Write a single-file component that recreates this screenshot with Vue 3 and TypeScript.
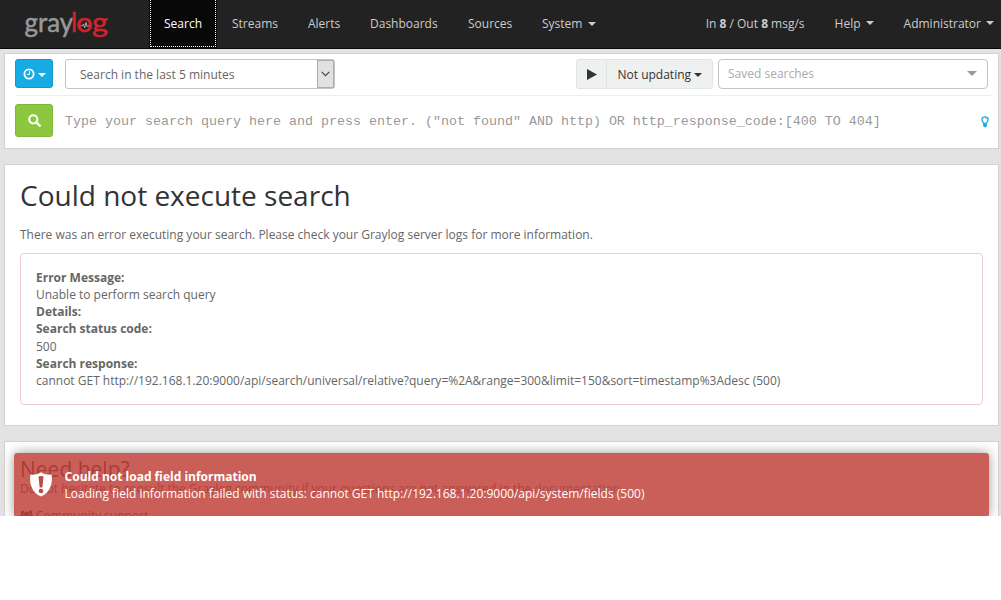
<script setup lang="ts">
interface NavItem {
  label: string
  key: string
  active?: boolean
  menu?: boolean
}

const navItems: NavItem[] = [
  { label: 'Search', key: 'search', active: true },
  { label: 'Streams', key: 'streams' },
  { label: 'Alerts', key: 'alerts' },
  { label: 'Dashboards', key: 'dashboards' },
  { label: 'Sources', key: 'sources' },
  { label: 'System', key: 'system', menu: true },
]

const errorLines: { text: string; strong: boolean }[] = [
  { text: 'Error Message:', strong: true },
  { text: 'Unable to perform search query', strong: false },
  { text: 'Details:', strong: true },
  { text: 'Search status code:', strong: true },
  { text: '500', strong: false },
  { text: 'Search response:', strong: true },
  {
    text: 'cannot GET http://192.168.1.20:9000/api/search/universal/relative?query=%2A&range=300&limit=150&sort=timestamp%3Adesc (500)',
    strong: false,
  },
]
</script>

<template>
  <div class="page">
    <nav class="navbar">
      <svg class="logo" width="90" height="36" viewBox="0 0 90 36">
        <text class="logo-gray" x="-.5" y="25" textLength="48.500" lengthAdjust="spacingAndGlyphs">gray</text>
        <text class="logo-red" x="46" y="25">l</text>
        <text class="logo-red" x="51.300" y="25" textLength="16.400" lengthAdjust="spacingAndGlyphs">o</text>
        <text class="logo-red" x="67" y="25" textLength="16" lengthAdjust="spacingAndGlyphs">g</text>
        <path d="M56 18.800h1.500l1-2 1.200 4 1.300-5.400 1.200 4.200.7-.8h1" fill="none" stroke="#c9c9c9" stroke-width=".8" />
      </svg>
      <div class="nav-left">
        <a v-for="item in navItems" :key="item.key" class="nav-item" :class="[item.key, { active: item.active }]">
          <span>{{ item.label }}</span><i v-if="item.menu" class="caret"></i>
        </a>
      </div>
      <div class="nav-right">
        <span class="throughput">In <b>8</b> / Out <b>8</b> msg/s</span>
        <span class="help">Help<i class="caret"></i></span>
        <span class="admin">Administrator<i class="caret"></i></span>
      </div>
    </nav>

    <section class="panel search-bar">
      <div class="row controls">
        <button class="btn blue">
          <svg width="12" height="12" viewBox="0 0 12 12" fill="none" stroke="#fff">
            <circle cx="6" cy="6" r="4.600" stroke-width="1.800" />
            <path d="M6.500 3.200v3.300H4" stroke-width="1" />
          </svg>
          <i class="caret"></i>
        </button>
        <div class="range">
          <span>Search in the last 5 minutes</span>
          <div class="range-arrow">
            <svg width="9" height="6" viewBox="0 0 9 6"><path d="M.7.8l3.800 3.800L8.300.8" fill="none" stroke="#444" stroke-width="1.200" /></svg>
          </div>
        </div>
        <div class="refresh">
          <div class="play"><svg width="10" height="11" viewBox="0 0 10 11"><path d="M0 0l10 5.500L0 11z" fill="#333" /></svg></div>
          <div class="updating"><span>Not updating</span><i class="caret"></i></div>
        </div>
        <div class="saved">
          <span>Saved searches</span>
          <i class="caret"></i>
        </div>
      </div>
      <div class="row query-row">
        <button class="btn green">
          <svg width="13" height="13" viewBox="0 0 13 13" fill="none" stroke="#fff">
            <circle cx="5.300" cy="5.300" r="4.100" stroke-width="2" />
            <path d="M8.300 8.300l3.400 3.400" stroke-width="2.400" stroke-linecap="round" />
          </svg>
        </button>
        <span class="query">Type your search query here and press enter. ("not found" AND http) OR http_response_code:[400 TO 404]</span>
        <svg class="bulb" width="8" height="12" viewBox="0 0 8 12">
          <path d="M2.600 7.500C2.500 6 .9 5.400.9 3.600.9 1.900 2.200.8 4 .8s3.100 1.100 3.100 2.800C7.100 5.400 5.500 6 5.400 7.500z" fill="#fff" stroke="#16ace3" stroke-width="1.300" />
          <path d="M2.100 7.300h3.800v2.700L4.800 11.300H3.200L2.100 10z" fill="#16ace3" />
          <path d="M4 2.300c.9 0 1.400.5 1.400 1.200" fill="none" stroke="#16ace3" stroke-width=".6" />
        </svg>
      </div>
    </section>

    <section class="panel error-panel">
      <h1>Could not execute search</h1>
      <p class="intro">There was an error executing your search. Please check your Graylog server logs for more information.</p>
      <div class="well">
        <div v-for="(line, i) in errorLines" :key="i" :class="{ strong: line.strong }">{{ line.text }}</div>
      </div>
    </section>

    <section class="panel help-panel">
      <h2>Need help?</h2>
      <p class="help-text">Do not hesitate to consult the Graylog community if your questions are not answered in the <a>documentation</a>.</p>
      <div class="support">
        <svg width="13" height="12" viewBox="0 0 14 12" preserveAspectRatio="none" fill="#330a0a">
          <circle cx="2.800" cy="2.400" r="1.900" /><circle cx="11.200" cy="2.400" r="1.900" /><circle cx="7" cy="4" r="2.600" />
          <path d="M0 8V5.800Q0 4.600 1.200 4.600H4Q4 6 5 6.900 3.300 7 2.800 8zM14 8V5.800Q14 4.600 12.800 4.600H10Q10 6 9 6.900 10.700 7 11.200 8zM2.500 12V9.500Q2.500 7.300 5 7.300H9Q11.500 7.300 11.500 9.500V12z" />
        </svg>
        <a>Community support</a>
      </div>
    </section>

    <div class="toast">
      <svg class="shield" width="22" height="25" viewBox="0 0 22 25">
        <path d="M11 .3C8.500 2.200 4.500 3 .3 2.500C0 6 0 10 .8 12.500C2.500 18.500 5.500 22 11 24.600C16.500 22 19.500 18.500 21.200 12.500C22 10 22 6 21.700 2.500C17.500 3 13.500 2.200 11 .3z" fill="#fff" />
        <path d="M8.500 4.500Q11 3.500 13.500 4.500l-1.100 11h-2.800z" fill="#bd4a45" />
        <circle cx="11" cy="19" r="2.300" fill="#bd4a45" />
      </svg>
      <div class="toast-copy">
        <strong>Could not load field information</strong>
        <span>Loading field information failed with status: cannot GET http://192.168.1.20:9000/api/system/fields (500)</span>
      </div>
    </div>
  </div>
</template>

<style>
body {
  margin: 0;
  background: #fff;
}
</style>

<style scoped>
* {
  box-sizing: border-box;
}
.page {
  position: relative;
  width: 1001px;
  height: 516px;
  overflow: hidden;
  background: #e3e3e3;
  color: #666;
  font: 12px/17.14px "Open Sans", "Noto Sans", sans-serif;
  white-space: nowrap;
}
.caret {
  display: inline-block;
  flex: none;
  border: 4px solid transparent;
  border-top-color: currentColor;
  border-bottom: 0;
}
.navbar {
  display: flex;
  height: 49px;
  background: #222;
  border-bottom: 1px solid #080808;
  color: #ccc;
}
.logo {
  flex: none;
  overflow: visible;
  margin: 7px 34px 0 25px;
}
.logo text {
  font-family: Lato, sans-serif;
  font-size: 26px;
  stroke-width: .5;
}
.logo-gray {
  fill: #97999c;
  stroke: #97999c;
}
.logo-red {
  fill: #d2232a;
  stroke: #d2232a;
}
.nav-left,
.nav-right {
  display: flex;
  height: 48px;
}
.nav-item {
  display: flex;
  align-items: center;
  height: 48px;
  padding: 0 0 1px 15px;
}
.nav-item .caret {
  margin: 0 0 0 6px;
}
.search {
  width: 68px;
}
.active {
  height: 50px;
  margin-top: -2px;
  padding-top: 2px;
  background: #080808;
  color: #fff;
  outline: 1px dotted #fff;
  outline-offset: -2px;
}
.streams {
  width: 76px;
}
.alerts {
  width: 62px;
}
.dashboards {
  width: 98px;
}
.sources {
  width: 74px;
}
.nav-right {
  flex: 1;
  justify-content: flex-end;
  align-items: center;
  padding: 0 7px 1px 0;
}
.help,
.admin {
  display: flex;
  align-items: center;
  margin-left: 30px;
}
.nav-right .caret {
  margin: 0 0 0 5px;
}
.panel {
  width: 995px;
  margin-left: 4px;
  background: #fff;
  border: 1px solid #d1d1d1;
}
.search-bar {
  height: 96px;
  margin-top: 4px;
  padding: 5px 5px 0 10px;
}
.row {
  display: flex;
}
.controls {
  height: 37px;
  border-bottom: 1px solid #eee;
}
.btn {
  display: flex;
  flex: none;
  align-items: center;
  justify-content: center;
  width: 38px;
  padding: 0;
  border: 1px solid;
  border-radius: 3px;
  color: #fff;
}
.blue {
  height: 29px;
  gap: 3px;
  background: #16ace3;
  border-color: #1398c9;
}
.blue .caret {
  margin-top: 2px;
}
.range {
  display: flex;
  align-items: center;
  justify-content: space-between;
  width: 270px;
  height: 30px;
  margin-left: 12px;
  padding-left: 14px;
  border: 1px solid #c4c4c4;
  border-radius: 3px;
}
.range > span,
.updating > span {
  padding-top: 2px;
}
.range-arrow {
  display: flex;
  align-items: center;
  justify-content: center;
  width: 17px;
  height: 28px;
  border: 1px solid #adadad;
  background: #e1e1e1;
}
.refresh {
  display: flex;
  width: 137px;
  height: 30px;
  margin-left: 241px;
  border: 1px solid #dfe3e3;
  border-radius: 3px;
  background: #eff1f1;
  color: #333;
}
.play {
  display: flex;
  align-items: center;
  justify-content: center;
  width: 30px;
  border-right: 1px solid #dfe3e3;
}
.updating {
  display: flex;
  align-items: center;
  padding-left: 10.5px;
}
.updating .caret {
  margin: 2px 0 0 2.5px;
}
.saved {
  display: flex;
  align-items: center;
  justify-content: space-between;
  width: 270px;
  height: 30px;
  margin-left: 5px;
  padding: 0 10px 0 9px;
  border: 1px solid #c4c4c4;
  border-radius: 4px;
  color: #aaa;
}
.saved .caret {
  margin-bottom: 2px;
  border-width: 5px 5px 0;
  border-top-color: #999;
}
.query-row {
  align-items: center;
  padding-top: 8px;
}
.green {
  height: 33px;
  background: #8dc63f;
  border-color: #7fb538;
}
.query {
  margin-left: 12px;
  padding-top: 2px;
  color: #999;
  font: 13.33px/17px "Liberation Mono", monospace;
}
.bulb {
  margin: 2px 4px 0 auto;
}
.error-panel {
  height: 262px;
  margin-top: 15px;
  padding: 0 15px;
}
h1 {
  margin: 14px 0 0;
  color: #333;
  font-size: 28px;
  font-weight: 400;
  line-height: 32px;
}
.intro {
  margin: 15px 0 0;
}
.well {
  height: 152px;
  margin-top: 10px;
  padding: 14.9px 15px 0;
  border: 1px solid #ebccd1;
  border-radius: 4px;
}
.strong {
  font-weight: 700;
}
.help-panel {
  height: 100px;
  margin-top: 15px;
  padding: 16px 15px 0;
  color: #111;
}
h2 {
  margin: 0;
  font-size: 21px;
  font-weight: 400;
  line-height: 23px;
}
.help-text {
  margin: -1px 0 0;
  color: #333;
}
.help-text a {
  color: #16779e;
}
.support {
  display: flex;
  align-items: center;
  gap: 3px;
  margin-top: 10px;
}
.toast {
  position: absolute;
  top: 453px;
  left: 14px;
  display: flex;
  width: 975px;
  height: 64px;
  padding: 15px;
  border-radius: 3px;
  background: rgba(193, 67, 61, .86);
  box-shadow: 0 0 12px #999;
  color: #fff;
}
.shield {
  flex: none;
  margin: 4px 12.6px 0 1px;
}
.toast-copy {
  display: flex;
  flex-direction: column;
}
</style>
